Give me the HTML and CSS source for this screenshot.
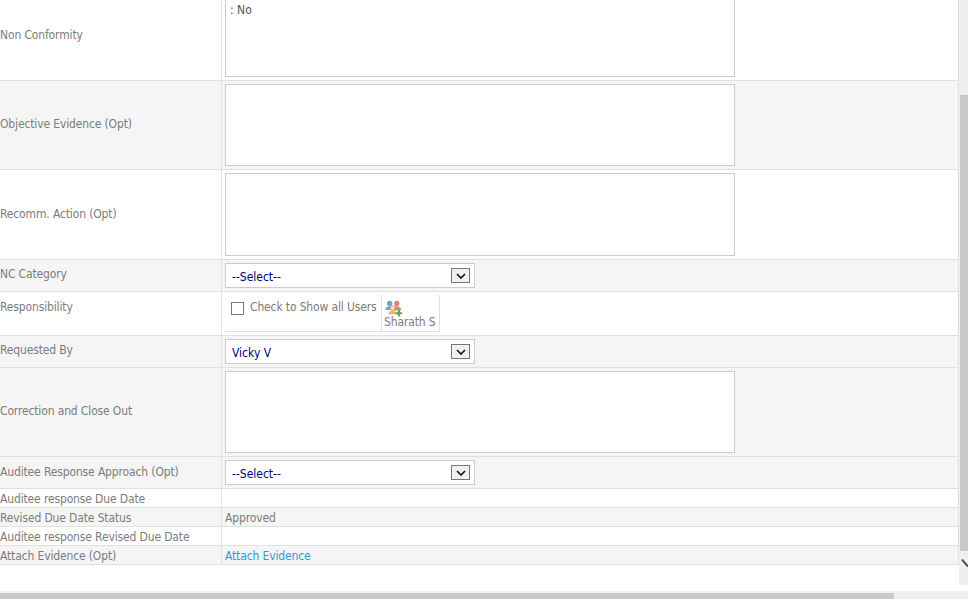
FILE: index.html
```html
<!DOCTYPE html>
<html lang="en">
<head>
<meta charset="utf-8">
<title>Non Conformity</title>
<link rel="stylesheet" href="styles.css">
</head>
<body>
<div class="viewport">
  <div class="main">
    <div class="form">
      <div class="row h80 clip">
        <div class="label mid first">Non Conformity</div>
        <div class="value clip"><textarea class="area area-top">: No</textarea></div>
      </div>
      <div class="row alt h89">
        <div class="label mid">Objective Evidence (Opt)</div>
        <div class="value"><textarea class="area area-82"></textarea></div>
      </div>
      <div class="row h90">
        <div class="label mid">Recomm. Action (Opt)</div>
        <div class="value"><textarea class="area area-83"></textarea></div>
      </div>
      <div class="row alt h32">
        <div class="label top top-a">NC Category</div>
        <div class="value"><div class="selectbox"><select class="select"><option>--Select--</option></select><span class="arrow"><svg width="10" height="6" viewBox="0 0 10 6"><path d="M1 1l4 4 4-4" fill="none" stroke="#111" stroke-width="1.6"/></svg></span></div></div>
      </div>
      <div class="row h44">
        <div class="label top top-b">Responsibility</div>
        <div class="value">
          <div class="resp">
            <label class="check"><input type="checkbox" class="box"><span>Check to Show all Users</span></label>
            <div class="user">
              <svg class="user-icon" width="17" height="17" viewBox="0 0 18 18">
                <circle cx="12.500" cy="3.600" r="2.800" fill="#e0807c"/>
                <path d="M8 11c0-3 1.800-4.400 4.500-4.400s4.500 1.400 4.500 4.400z" fill="#e0807c"/>
                <circle cx="5" cy="3.600" r="2.800" fill="#6fa0cf"/>
                <path d="M0.500 10.500c0-2.800 1.800-4 4.500-4s4 1.200 4 4z" fill="#6fa0cf"/>
                <circle cx="8" cy="8.500" r="2.400" fill="#fbe6c8" stroke="#e09a55" stroke-width="1"/>
                <path d="M3.500 15c0-2.500 2-3.500 4.500-3.500s4 1 4 3.500z" fill="#eeb06f"/>
                <path d="M11.500 13h2.300v-2.500h2v2.500h2.200v2h-2.200v2.500h-2v-2.500h-2.300z" fill="#4caf3c"/>
              </svg>
              <span class="user-name">Sharath S</span>
            </div>
          </div>
        </div>
      </div>
      <div class="row alt h32">
        <div class="label top top-a">Requested By</div>
        <div class="value"><div class="selectbox"><select class="select"><option>Vicky V</option></select><span class="arrow"><svg width="10" height="6" viewBox="0 0 10 6"><path d="M1 1l4 4 4-4" fill="none" stroke="#111" stroke-width="1.6"/></svg></span></div></div>
      </div>
      <div class="row alt h89">
        <div class="label mid">Correction and Close Out</div>
        <div class="value"><textarea class="area area-82"></textarea></div>
      </div>
      <div class="row alt h32">
        <div class="label top top-b">Auditee Response Approach (Opt)</div>
        <div class="value"><div class="selectbox"><select class="select"><option>--Select--</option></select><span class="arrow"><svg width="10" height="6" viewBox="0 0 10 6"><path d="M1 1l4 4 4-4" fill="none" stroke="#111" stroke-width="1.6"/></svg></span></div></div>
      </div>
      <div class="row h19">
        <div class="label small">Auditee response Due Date</div>
        <div class="value text"></div>
      </div>
      <div class="row alt h19">
        <div class="label small">Revised Due Date Status</div>
        <div class="value text">Approved</div>
      </div>
      <div class="row h19">
        <div class="label small">Auditee response Revised Due Date</div>
        <div class="value text"></div>
      </div>
      <div class="row alt h19">
        <div class="label small">Attach Evidence (Opt)</div>
        <div class="value text"><a class="link" href="#">Attach Evidence</a></div>
      </div>
    </div>
    <div class="vbar">
      <div class="vspace"></div>
      <div class="vthumb"></div>
      <div class="vend"><svg width="8" height="9" viewBox="0 0 8 9"><path d="M2 0.500l6 7" fill="none" stroke="#505050" stroke-width="2"/></svg></div>
    </div>
  </div>
  <div class="hbar"><div class="hthumb"></div></div>
</div>
</body>
</html>
```
FILE: styles.css
```css
html, body {
  margin: 0;
  padding: 0;
  background: #fff;
  overflow: hidden;
}
.viewport {
  width: 968px;
  height: 599px;
  display: flex;
  flex-direction: column;
  font-family: Tahoma, "DejaVu Sans Condensed", "Noto Sans", sans-serif;
  font-size: 12px;
  letter-spacing: -0.14px;
  color: #7c7c7c;
}
.main {
  display: flex;
  height: 585px;
  flex: none;
}
.form {
  width: 959px;
  flex: none;
  box-sizing: border-box;
  border-right: 1px solid #e0e0e0;
  height: 565px;
}
.row {
  display: grid;
  grid-template-columns: 221px 1fr;
  grid-template-rows: minmax(0, 1fr);
  box-sizing: border-box;
  border-bottom: 1px solid #e0e0e0;
}
.alt { background: #f5f5f5; }
.h80 { height: 81px; }
.h89 { height: 89px; }
.h90 { height: 90px; }
.h32 { height: 32px; }
.h44 { height: 44px; }
.h19 { height: 19px; }
.clip { overflow: hidden; }
.label {
  display: flex;
  white-space: nowrap;
}
.mid { align-items: center; padding-bottom: 2px; }
.first { padding-bottom: 10px; }
.small { align-items: center; padding-top: 1px; }
.top { align-items: flex-start; }
.top-a { padding-top: 7px; }
.top-b { padding-top: 8px; }
.value {
  border-left: 1px solid #e0e0e0;
  padding-left: 3px;
  display: flex;
  align-items: center;
  background: inherit;
}
.text { padding-top: 1px; }
.area {
  width: 510px;
  box-sizing: border-box;
  border: 1px solid #ccc;
  background: #fff;
  margin: 0;
  padding: 4px;
  font: inherit;
  letter-spacing: normal;
  color: #555;
  resize: none;
  outline: none;
  display: block;
}
.area-top { height: 79px; flex: none; align-self: flex-end; margin-bottom: 3px; }
.area-82 { height: 82px; }
.area-83 { height: 83px; }
.selectbox {
  position: relative;
  width: 250px;
  height: 25px;
}
.select {
  width: 100%;
  height: 100%;
  appearance: none;
  box-sizing: border-box;
  border: 1px solid #ccc;
  background: #fff;
  color: #000080;
  font: inherit;
  letter-spacing: normal;
  padding: 2px 0 0 6px;
  margin: 0;
  border-radius: 0;
  outline: none;
}
.arrow {
  position: absolute;
  right: 5px;
  top: 5px;
  width: 19px;
  height: 15px;
  box-sizing: border-box;
  border: 1px solid #777;
  background: #f0f0f0;
  display: flex;
  align-items: center;
  justify-content: center;
}
.resp {
  display: flex;
  align-self: flex-start;
  height: 36px;
  margin-top: 3px;
  border-bottom: 1px solid #e0e0e0;
}
.check {
  display: flex;
  align-items: flex-start;
  gap: 6px;
  padding: 5px 0 0 6px;
  width: 156px;
  box-sizing: border-box;
  white-space: nowrap;
}
.box {
  appearance: none;
  width: 13px;
  height: 13px;
  margin: 2px 0 0;
  border: 1px solid #777;
  background: #fff;
  flex: none;
}
.user {
  border-left: 1px solid #e0e0e0;
  border-right: 1px solid #e0e0e0;
  width: 59px;
  box-sizing: border-box;
  padding: 5px 0 0 2px;
  display: flex;
  flex-direction: column;
  align-items: flex-start;
}
.user-icon { display: block; flex: none; margin-left: 1px; }
.user-name { line-height: 14px; margin-top: -2px; white-space: nowrap; }
.link { color: #2a9ae0; text-decoration: none; }
.vbar {
  width: 9px;
  flex: none;
  background: #efefef;
  display: flex;
  flex-direction: column;
  align-items: flex-end;
}
.vspace { height: 95px; flex: none; }
.vthumb {
  width: 8px;
  height: 456px;
  background: #c8c8c8;
  flex: none;
}
.vend {
  width: 8px;
  height: 34px;
  overflow: hidden;
  padding-top: 8px;
  box-sizing: border-box;
}
.vend svg { display: block; }
.hbar {
  margin-top: 6px;
  height: 8px;
  background: #efefef;
  flex: none;
}
.hthumb {
  width: 894px;
  height: 6px;
  margin-top: 2px;
  background: #c8c8c8;
}
```
